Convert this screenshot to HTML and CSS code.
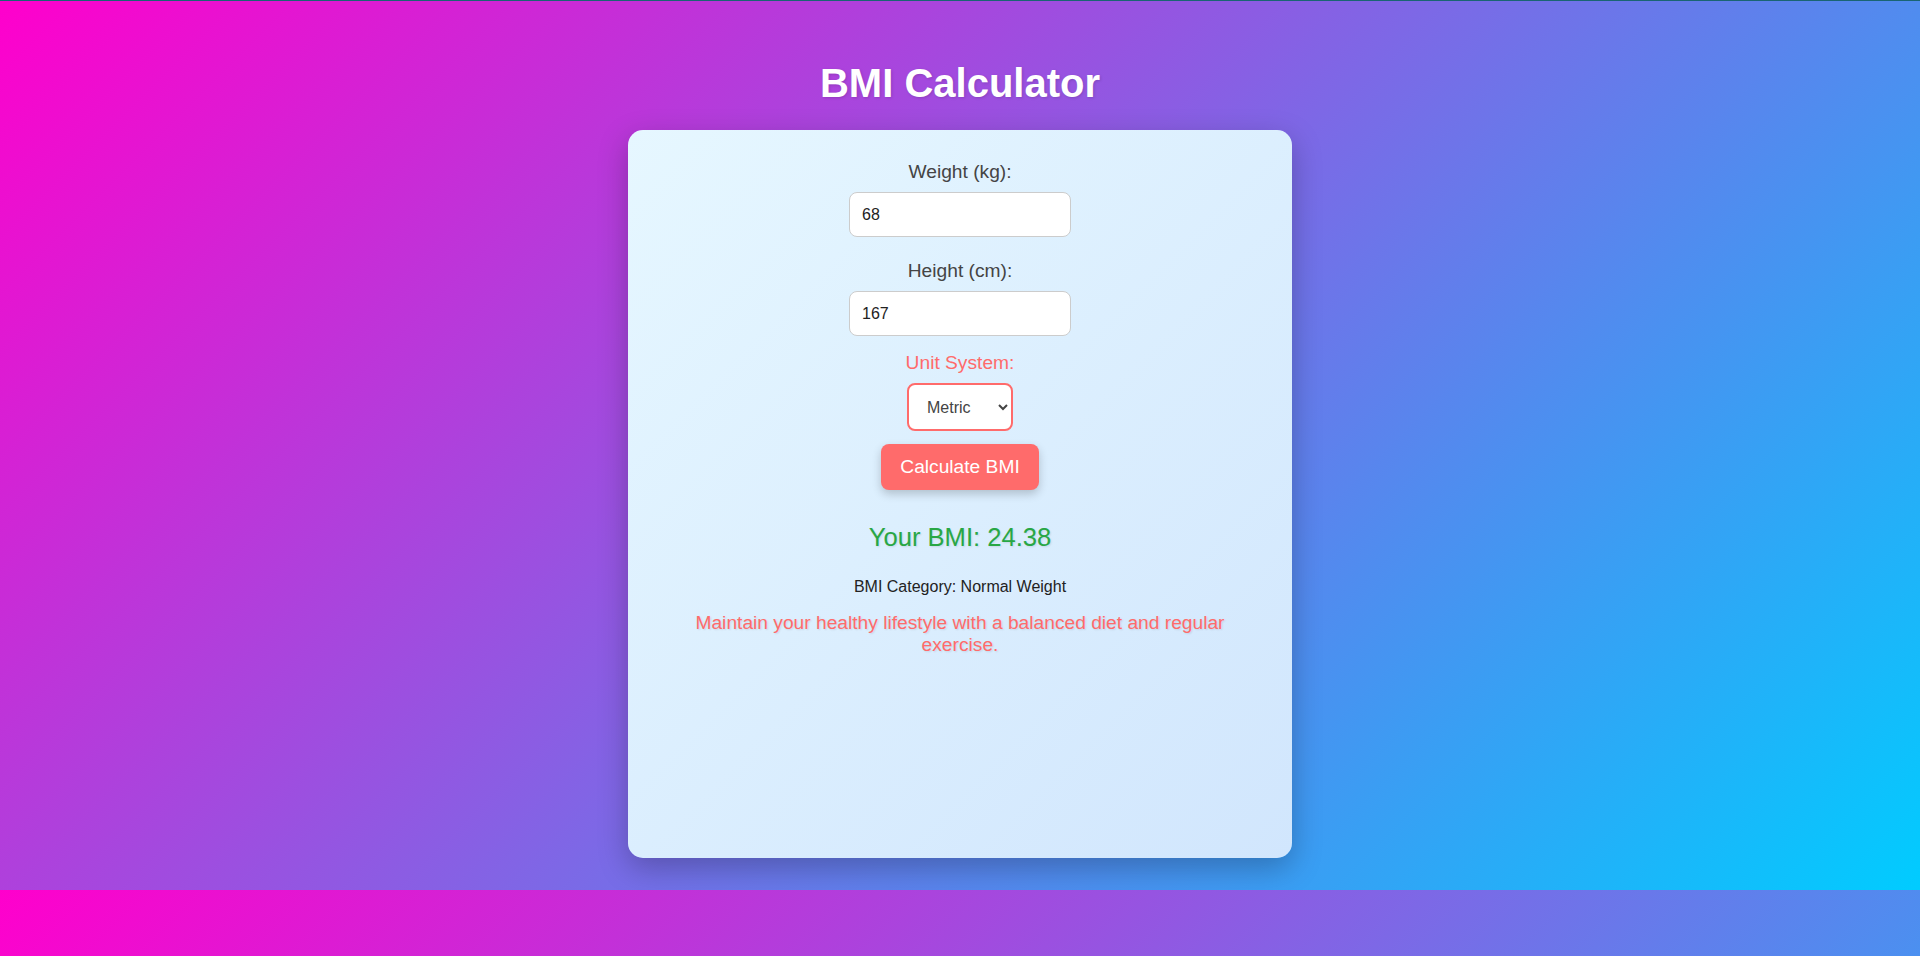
FILE: index.html
```html
<!DOCTYPE html>
<html lang="en">
<head>
<meta charset="UTF-8">
<title>BMI Calculator</title>
<link rel="stylesheet" href="styles.css">
</head>
<body>
  <h1 class="title">BMI Calculator</h1>
  <main class="card">
    <label class="field-label" for="weight">Weight (kg):</label>
    <input class="field-input" id="weight" type="number" value="68">
    <label class="field-label" for="height">Height (cm):</label>
    <input class="field-input field-input--last" id="height" type="number" value="167">
    <label class="field-label field-label--accent" for="unit">Unit System:</label>
    <select class="unit-select" id="unit">
      <option>Metric</option>
      <option>Imperial</option>
    </select>
    <button class="calc-btn" type="button">Calculate BMI</button>
    <div class="result">Your BMI: 24.38</div>
    <div class="category">BMI Category: Normal Weight</div>
    <p class="advice">Maintain your healthy lifestyle with a balanced diet and regular exercise.</p>
  </main>
</body>
</html>
```
FILE: styles.css
```css
html {
  border-top: 1px solid #1a6473;
}

body {
  margin: 0;
  padding: 59px 0 32px;
  display: flex;
  flex-direction: column;
  align-items: center;
  font-family: "Liberation Sans", Arial, sans-serif;
  background: linear-gradient(135deg, #ff00cc, #00ccff);
}

.title {
  margin: 0 0 24px;
  font-size: 40px;
  line-height: 46px;
  font-weight: bold;
  color: #ffffff;
  text-shadow: 1px 1px 3px rgba(0, 0, 0, 0.15);
}

.card {
  box-sizing: border-box;
  width: 664px;
  height: 728px;
  padding: 31px 40px 0;
  display: flex;
  flex-direction: column;
  align-items: center;
  border-radius: 15px;
  background: linear-gradient(135deg, #e6f7ff, #d1e6fd);
  box-shadow: 0 10px 30px rgba(0, 0, 0, 0.25);
}

.field-label {
  display: block;
  font-size: 19.2px;
  line-height: 22px;
  color: #444444;
  margin-bottom: 9px;
}

.field-label--accent {
  color: #ff6b6b;
}

.field-input {
  box-sizing: border-box;
  width: 222px;
  height: 45px;
  padding: 0 12px;
  margin: 0 0 23px;
  border: 1px solid #cccccc;
  border-radius: 8px;
  background: #ffffff;
  font-family: "Liberation Sans", Arial, sans-serif;
  font-size: 16px;
  color: #222222;
  outline: none;
}

.field-input--last {
  margin-bottom: 16px;
}

.field-input::-webkit-inner-spin-button,
.field-input::-webkit-outer-spin-button {
  -webkit-appearance: none;
  margin: 0;
}

.unit-select {
  box-sizing: border-box;
  width: 106px;
  height: 48px;
  padding: 0 8px 0 14px;
  margin: 0 0 13px;
  border: 2px solid #ff6b6b;
  border-radius: 8px;
  background: #ffffff;
  font-family: "Liberation Sans", Arial, sans-serif;
  font-size: 16px;
  color: #444444;
}

.calc-btn {
  box-sizing: border-box;
  height: 46px;
  padding: 0 19px;
  margin: 0 0 33px;
  border: none;
  border-radius: 8px;
  background: #ff6b6b;
  color: #ffffff;
  font-family: "Liberation Sans", Arial, sans-serif;
  font-size: 19.2px;
  box-shadow: 0 4px 10px rgba(0, 0, 0, 0.2);
  cursor: pointer;
}

.result {
  font-size: 25.6px;
  line-height: 29px;
  color: #28a745;
  margin-bottom: 26px;
  text-shadow: 1px 1px 2px rgba(0, 0, 0, 0.1);
}

.category {
  font-size: 16px;
  line-height: 18px;
  color: #222222;
  margin-bottom: 16px;
}

.advice {
  margin: 0;
  font-size: 19.2px;
  line-height: 22px;
  color: #ff6b6b;
  text-align: center;
  text-shadow: 1px 1px 2px rgba(0, 0, 0, 0.1);
}
```
